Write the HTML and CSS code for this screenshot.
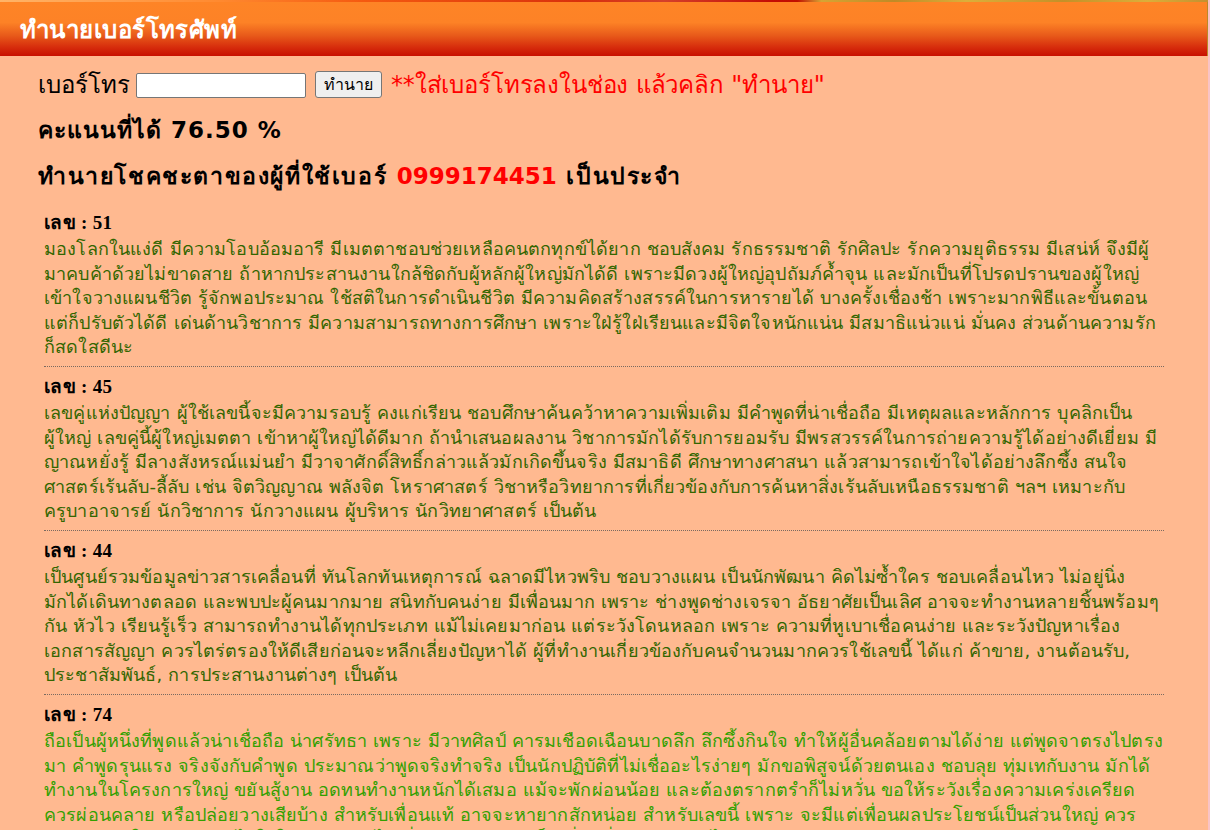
FILE: index.html
```html
<!DOCTYPE html>
<html lang="th">
<head>
<meta charset="utf-8">
<title>ทำนายเบอร์โทรศัพท์</title>
<link rel="stylesheet" href="styles.css">
</head>
<body>
<div class="page">
  <div class="topstrip"></div>
  <header class="header"><h1 class="title">ทำนายเบอร์โทรศัพท์</h1></header>
  <main class="content">
    <form class="form-row">
      <label class="label" for="tel">เบอร์โทร</label>
      <input id="tel" class="tel-input" type="text">
      <button type="button" class="btn">ทำนาย</button>
      <span class="hint">**ใส่เบอร์โทรลงในช่อง แล้วคลิก "ทำนาย"</span>
    </form>
    <p class="score">คะแนนที่ได้ 76.50 %</p>
    <p class="fortune">ทำนายโชคชะตาของผู้ที่ใช้เบอร์ <span class="num">0999174451</span> เป็นประจำ</p>

    <section class="item first">
      <div class="item-title">เลข : 51</div>
      <div class="item-text">มองโลกในแง่ดี มีความโอบอ้อมอารี มีเมตตาชอบช่วยเหลือคนตกทุกข์ได้ยาก ชอบสังคม รักธรรมชาติ รักศิลปะ รักความยุติธรรม มีเสน่ห์ จึงมีผู้มาคบค้าด้วยไม่ขาดสาย ถ้าหากประสานงานใกล้ชิดกับผู้หลักผู้ใหญ่มักได้ดี เพราะมีดวงผู้ใหญ่อุปถัมภ์ค้ำจุน และมักเป็นที่โปรดปรานของผู้ใหญ่ เข้าใจวางแผนชีวิต รู้จักพอประมาณ ใช้สติในการดำเนินชีวิต มีความคิดสร้างสรรค์ในการหารายได้ บางครั้งเชื่องช้า เพราะมากพิธีและขั้นตอน แต่ก็ปรับตัวได้ดี เด่นด้านวิชาการ มีความสามารถทางการศึกษา เพราะใฝ่รู้ใฝ่เรียนและมีจิตใจหนักแน่น มีสมาธิแน่วแน่ มั่นคง ส่วนด้านความรักก็สดใสดีนะ</div>
    </section>

    <section class="item">
      <div class="item-title">เลข : 45</div>
      <div class="item-text">เลขคู่แห่งปัญญา ผู้ใช้เลขนี้จะมีความรอบรู้ คงแก่เรียน ชอบศึกษาค้นคว้าหาความเพิ่มเติม มีคำพูดที่น่าเชื่อถือ มีเหตุผลและหลักการ บุคลิกเป็นผู้ใหญ่ เลขคู่นี้ผู้ใหญ่เมตตา เข้าหาผู้ใหญ่ได้ดีมาก ถ้านำเสนอผลงาน วิชาการมักได้รับการยอมรับ มีพรสวรรค์ในการถ่ายความรู้ได้อย่างดีเยี่ยม มีญาณหยั่งรู้ มีลางสังหรณ์แม่นยำ มีวาจาศักดิ์สิทธิ์กล่าวแล้วมักเกิดขึ้นจริง มีสมาธิดี ศึกษาทางศาสนา แล้วสามารถเข้าใจได้อย่างลึกซึ้ง สนใจศาสตร์เร้นลับ-ลี้ลับ เช่น จิตวิญญาณ พลังจิต โหราศาสตร์ วิชาหรือวิทยาการที่เกี่ยวข้องกับการค้นหาสิ่งเร้นลับเหนือธรรมชาติ ฯลฯ เหมาะกับครูบาอาจารย์ นักวิชาการ นักวางแผน ผู้บริหาร นักวิทยาศาสตร์ เป็นต้น</div>
    </section>

    <section class="item">
      <div class="item-title">เลข : 44</div>
      <div class="item-text">เป็นศูนย์รวมข้อมูลข่าวสารเคลื่อนที่ ทันโลกทันเหตุการณ์ ฉลาดมีไหวพริบ ชอบวางแผน เป็นนักพัฒนา คิดไม่ซ้ำใคร ชอบเคลื่อนไหว ไม่อยู่นิ่ง มักได้เดินทางตลอด และพบปะผู้คนมากมาย สนิทกับคนง่าย มีเพื่อนมาก เพราะ ช่างพูดช่างเจรจา อัธยาศัยเป็นเลิศ อาจจะทำงานหลายชิ้นพร้อมๆกัน หัวไว เรียนรู้เร็ว สามารถทำงานได้ทุกประเภท แม้ไม่เคยมาก่อน แต่ระวังโดนหลอก เพราะ ความที่หูเบาเชื่อคนง่าย และระวังปัญหาเรื่องเอกสารสัญญา ควรไตร่ตรองให้ดีเสียก่อนจะหลีกเลี่ยงปัญหาได้ ผู้ที่ทำงานเกี่ยวข้องกับคนจำนวนมากควรใช้เลขนี้ ได้แก่ ค้าขาย, งานต้อนรับ, ประชาสัมพันธ์, การประสานงานต่างๆ เป็นต้น</div>
    </section>

    <section class="item">
      <div class="item-title">เลข : 74</div>
      <div class="item-text bright">ถือเป็นผู้หนึ่งที่พูดแล้วน่าเชื่อถือ น่าศรัทธา เพราะ มีวาทศิลป์ คารมเชือดเฉือนบาดลึก ลึกซึ้งกินใจ ทำให้ผู้อื่นคล้อยตามได้ง่าย แต่พูดจาตรงไปตรงมา คำพูดรุนแรง จริงจังกับคำพูด ประมาณว่าพูดจริงทำจริง เป็นนักปฏิบัติที่ไม่เชื่ออะไรง่ายๆ มักขอพิสูจน์ด้วยตนเอง ชอบลุย ทุ่มเทกับงาน มักได้ทำงานในโครงการใหญ่ ขยันสู้งาน อดทนทำงานหนักได้เสมอ แม้จะพักผ่อนน้อย และต้องตรากตรำก็ไม่หวั่น ขอให้ระวังเรื่องความเคร่งเครียด ควรผ่อนคลาย หรือปล่อยวางเสียบ้าง สำหรับเพื่อนแท้ อาจจะหายากสักหน่อย สำหรับเลขนี้ เพราะ จะมีแต่เพื่อนผลประโยชน์เป็นส่วนใหญ่ ควรเลือกคบคนให้ดี และอย่าไว้ใจใครง่ายๆ ถ้าได้เพื่อนแท้สักคนจะเป็นเพื่อนที่ช่วยเหลือกันไปตลอดชีวิต</div>
    </section>
  </main>
</div>
</body>
</html>
```

FILE: styles.css
```css
html, body {
  margin: 0;
  padding: 0;
}
body {
  background: #f9c3c6;
  font-family: "DejaVu Sans", sans-serif;
  overflow: hidden;
}
.page {
  width: 1208px;
  background: #ffb990;
  min-height: 830px;
}
.topstrip {
  height: 2px;
  background: linear-gradient(to right, #ffb468 0%, #ff8a30 18%, #f55a10 30%, #d8300c 48%, #d4402a 55%, #c40c04 64%, #c01000 66%, #d6a434 68%, #c08a26 74%, #dcae3a 80%, #c49028 88%, #dcae3a 95%, #c49030 100%);
}
.header {
  height: 54px;
  background: linear-gradient(to bottom, #fe8426 0%, #fd8226 38%, #e85a1a 62%, #d62c0c 84%, #c81000 100%);
  border-right: 1px solid #b88a2a;
  display: flex;
  align-items: center;
  padding-left: 20px;
}
.title {
  margin: 0;
  color: #ffffff;
  font-size: 24px;
  letter-spacing: 0.45px;
  font-weight: bold;
}
.content {
  padding: 13px 0 0 0;
}
.form-row {
  display: flex;
  align-items: center;
  margin: 0 0 0 38px;
  height: 30px;
}
.label {
  font-size: 24px;
  color: #000;
  margin-right: 6px;
}
.tel-input {
  box-sizing: border-box;
  width: 170px;
  height: 25px;
  padding: 1px 2px;
  border: 1px solid #767676;
  border-radius: 2px;
  background: #fff;
  margin: 2px 9px 0 0;
}
.btn {
  box-sizing: border-box;
  width: 67px;
  height: 27px;
  font-family: "DejaVu Sans", sans-serif;
  font-size: 16px;
  color: #000;
  background: #efefef;
  border: 1px solid #767676;
  border-radius: 3px;
  padding: 0;
  margin-right: 9px;
}
.hint {
  color: #ff0000;
  font-size: 24px;
  letter-spacing: -0.15px;
}
.score {
  margin: 15px 0 0 38px;
  font-size: 23px;
  letter-spacing: 1px;
  font-weight: bold;
  color: #000;
  line-height: 32px;
}
.fortune {
  margin: 14px 0 0 38px;
  font-size: 23px;
  letter-spacing: 1.6px;
  font-weight: bold;
  color: #000;
  line-height: 32px;
}
.num {
  color: #ff0000;
  letter-spacing: 0;
}
.item {
  margin: 0 44px 0 44px;
  padding: 8px 0 6px 0;
  border-bottom: 1px dotted #7a6a60;
}
.item.first {
  padding-top: 19px;
}
.item-title {
  font-family: "Liberation Serif", serif;
  font-weight: bold;
  font-size: 19px;
  letter-spacing: 0.3px;
  color: #000;
  line-height: 24px;
  margin-bottom: 2px;
}
.item-text {
  font-size: 18px;
  letter-spacing: 0.15px;
  line-height: 24.6px;
  color: #336600;
}
.item-text.bright {
  color: #33a000;
}
```
